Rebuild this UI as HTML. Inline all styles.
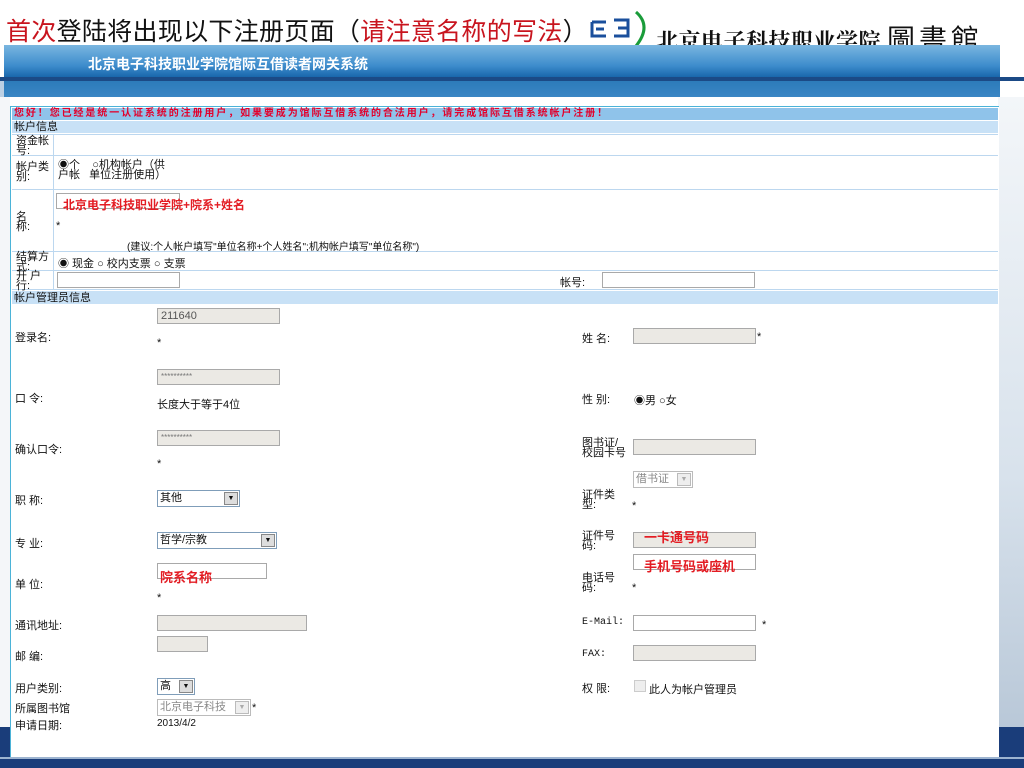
<!DOCTYPE html>
<html><head><meta charset="utf-8"><style>
*{margin:0;padding:0;box-sizing:border-box}
body{width:1024px;height:768px;overflow:hidden;background:#fff;position:relative;font-family:"Liberation Sans","Noto Sans CJK SC",sans-serif;font-size:11px;color:#111}
.a{position:absolute;white-space:nowrap}
.in{position:absolute;border:1px solid #a9a9a9;background:#fff;height:16px}
.g{background:#ebe9e4}
.sel{position:absolute;border:1px solid #7f9db9;background:#fff;height:17px;font-size:11px;padding-left:2px;line-height:15px}
.sel i{position:absolute;right:1px;top:1px;width:14px;height:13px;background:#ddd;border:1px solid #888;font-style:normal;font-size:7px;text-align:center;line-height:11px}
.red{color:#e31c23;font-weight:bold;font-size:13px}
.hl{position:absolute;left:12px;width:986px;height:1px;background:#bcd7ef}
.lbl{font-size:11px;line-height:10px}
</style></head><body>
<div class="a" style="left:6px;top:12px;font-size:25px;letter-spacing:0.3px"><span style="color:#c8141e">首次</span>登陆将出现以下注册页面（<span style="color:#c8141e">请注意名称的写法</span>）</div>
<svg class="a" style="left:588px;top:8px" width="70" height="40" viewBox="0 0 70 40"><path d="M4 14h14M4 14v14h14M8 21h8" stroke="#1a4f9c" stroke-width="3" fill="none"/><path d="M26 12h14v16H26M30 20h10" stroke="#1a4f9c" stroke-width="3" fill="none"/><path d="M48 4q16 14 0 34" stroke="#1a9c3a" stroke-width="3" fill="none"/></svg>
<div class="a" style="left:656px;top:18px;font-size:22px;font-weight:bold;font-family:'Noto Serif CJK SC',serif;letter-spacing:0.5px">北京电子科技职业学院 <span style="font-weight:normal;font-size:28px;font-family:'Noto Sans CJK SC',sans-serif;letter-spacing:4px">圖書館</span></div>
<div class="a" style="left:4px;top:45px;width:996px;height:52px;background:linear-gradient(#7ab6e0 0%,#3d8ccc 40%,#1866ab 62%,#2b7ab9 66%,#3a86c4 100%)"></div>
<div class="a" style="left:0;top:77px;width:1024px;height:4px;background:#1b4a86"></div>
<div class="a" style="left:0;top:81px;width:4px;height:16px;background:#bcd0e4"></div>
<div class="a" style="left:88px;top:54px;color:#fff;font-weight:bold;font-size:14px">北京电子科技职业学院馆际互借读者网关系统</div>
<div class="a" style="left:998px;top:97px;width:26px;height:630px;background:linear-gradient(#f3f6f9,#d8e2ec 60%,#b9c8d8)"></div>
<div class="a" style="left:0;top:97px;width:10px;height:630px;background:#f4f6f9"></div>
<div class="a" style="left:0;top:727px;width:10px;height:41px;background:#1a3d7a"></div>
<div class="a" style="left:998px;top:727px;width:26px;height:41px;background:#1a3d7a"></div>
<div class="a" style="left:0;top:757px;width:1024px;height:11px;background:#1a3d7a;border-top:2px solid #9db4d0"></div>
<div class="a" style="left:10px;top:106px;width:989px;height:651px;border:1px solid #4bb3d8;border-right:none;border-bottom:none;background:#fff"></div>
<div class="a" style="left:12px;top:108px;width:986px;height:12px;background:#8fc3ea"></div>
<div class="a" style="left:14px;top:108px;color:#e3002b;font-weight:bold;font-size:10px;line-height:12px;letter-spacing:1.9px">您好！您已经是统一认证系统的注册用户，如果要成为馆际互借系统的合法用户，请完成馆际互借系统帐户注册！</div>
<div class="a" style="left:12px;top:121px;width:986px;height:12px;background:#c8e1f6"></div>
<div class="a lbl" style="left:14px;top:122px">帐户信息</div>
<div class="hl" style="top:134px"></div><div class="hl" style="top:155px"></div><div class="hl" style="top:189px"></div><div class="hl" style="top:251px"></div><div class="hl" style="top:270px"></div><div class="hl" style="top:289px"></div>
<div class="a" style="left:53px;top:134px;width:1px;height:156px;background:#bcd7ef"></div>
<div class="a lbl" style="left:16px;top:136px">资金帐<br>号:</div>
<div class="a lbl" style="left:16px;top:162px">帐户类<br>别:</div>
<div class="a lbl" style="left:58px;top:160px">◉个&nbsp;&nbsp;&nbsp;&nbsp;○机构帐户（供<br>户帐&nbsp;&nbsp;&nbsp;单位注册使用）</div>
<div class="in" style="left:56px;top:193px;width:124px;height:16px"></div>
<div class="a red" style="left:63px;top:196px;font-size:12px">北京电子科技职业学院+院系+姓名</div>
<div class="a" style="left:56px;top:220px">*</div>
<div class="a lbl" style="left:16px;top:212px">名<br>称:</div>
<div class="a" style="left:127px;top:238px;font-size:10px">(建议:个人帐户填写"单位名称+个人姓名";机构帐户填写"单位名称")</div>
<div class="a lbl" style="left:16px;top:252px">结算方<br>式:</div>
<div class="a" style="left:58px;top:255px;font-size:11px">◉ 现金 ○ 校内支票 ○ 支票</div>
<div class="a lbl" style="left:16px;top:271px">开 户<br>行:</div>
<div class="in" style="left:57px;top:272px;width:123px"></div>
<div class="a" style="left:560px;top:274px">帐号:</div>
<div class="in" style="left:602px;top:272px;width:153px"></div>
<div class="a" style="left:12px;top:291px;width:986px;height:13px;background:#c8e1f6"></div>
<div class="a lbl" style="left:14px;top:293px">帐户管理员信息</div>
<div class="a" style="left:15px;top:329px">登录名:</div>
<div class="in g" style="left:157px;top:308px;width:123px;color:#555;padding-left:3px;line-height:14px">211640</div>
<div class="a" style="left:157px;top:337px">*</div>
<div class="a" style="left:15px;top:390px">口 令:</div>
<div class="in g" style="left:157px;top:369px;width:123px;color:#777;font-size:8px;padding-left:3px;line-height:14px">**********</div>
<div class="a" style="left:157px;top:396px">长度大于等于4位</div>
<div class="a" style="left:15px;top:441px">确认口令:</div>
<div class="in g" style="left:157px;top:430px;width:123px;color:#777;font-size:8px;padding-left:3px;line-height:14px">**********</div>
<div class="a" style="left:157px;top:458px">*</div>
<div class="a" style="left:15px;top:492px">职 称:</div>
<div class="sel" style="left:157px;top:490px;width:83px">其他<i>▼</i></div>
<div class="a" style="left:15px;top:535px">专 业:</div>
<div class="sel" style="left:157px;top:532px;width:120px">哲学/宗教<i>▼</i></div>
<div class="a" style="left:15px;top:576px">单 位:</div>
<div class="in" style="left:157px;top:563px;width:110px"></div>
<div class="a red" style="left:160px;top:567px">院系名称</div>
<div class="a" style="left:157px;top:592px">*</div>
<div class="a" style="left:15px;top:617px">通讯地址:</div>
<div class="in g" style="left:157px;top:615px;width:150px"></div>
<div class="a" style="left:15px;top:648px">邮 编:</div>
<div class="in g" style="left:157px;top:636px;width:51px"></div>
<div class="a" style="left:15px;top:680px">用户类别:</div>
<div class="sel" style="left:157px;top:678px;width:38px">高<i>▼</i></div>
<div class="a" style="left:15px;top:700px">所属图书馆</div>
<div class="sel" style="left:157px;top:699px;width:94px;color:#888;border-color:#bbb">北京电子科技<i style="background:#eee;border-color:#bbb;color:#aaa">▼</i></div>
<div class="a" style="left:252px;top:702px">*</div>
<div class="a" style="left:15px;top:717px">申请日期:</div>
<div class="a" style="left:157px;top:718px;font-size:10px">2013/4/2</div>
<div class="a" style="left:582px;top:330px">姓 名:</div>
<div class="in g" style="left:633px;top:328px;width:123px"></div>
<div class="a" style="left:757px;top:331px">*</div>
<div class="a" style="left:582px;top:391px">性 别:</div>
<div class="a" style="left:634px;top:392px">◉男 ○女</div>
<div class="a lbl" style="left:582px;top:438px">图书证/<br>校园卡号</div>
<div class="in g" style="left:633px;top:439px;width:123px"></div>
<div class="sel" style="left:633px;top:471px;width:60px;color:#888;border-color:#bbb">借书证<i style="background:#eee;border-color:#bbb;color:#aaa">▼</i></div>
<div class="a lbl" style="left:582px;top:490px">证件类<br>型:</div>
<div class="a" style="left:632px;top:500px">*</div>
<div class="a lbl" style="left:582px;top:531px">证件号<br>码:</div>
<div class="in g" style="left:633px;top:532px;width:123px"></div>
<div class="a red" style="left:644px;top:527px">一卡通号码</div>
<div class="in" style="left:633px;top:554px;width:123px"></div>
<div class="a red" style="left:644px;top:556px">手机号码或座机</div>
<div class="a lbl" style="left:582px;top:573px">电话号<br>码:</div>
<div class="a" style="left:632px;top:582px">*</div>
<div class="a" style="left:582px;top:617px;font-family:'Liberation Mono',monospace;font-size:10px">E-Mail:</div>
<div class="in" style="left:633px;top:615px;width:123px"></div>
<div class="a" style="left:762px;top:619px">*</div>
<div class="a" style="left:582px;top:649px;font-family:'Liberation Mono',monospace;font-size:10px">FAX:</div>
<div class="in g" style="left:633px;top:645px;width:123px"></div>
<div class="a" style="left:582px;top:680px">权 限:</div>
<div class="a" style="left:634px;top:680px;width:12px;height:12px;border:1px solid #ccc;background:#eee"></div>
<div class="a" style="left:649px;top:681px">此人为帐户管理员</div>
</body></html>
